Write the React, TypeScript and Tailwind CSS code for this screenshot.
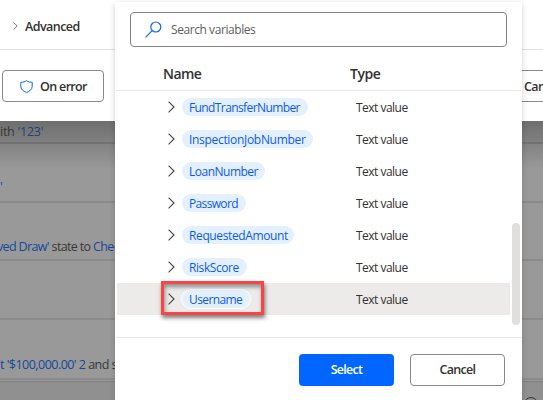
import React from "react";

const variables = [
  { name: "FundTransferNumber", chip: "w-[126px] tracking-[-0.6px]" },
  { name: "InspectionJobNumber", chip: "w-[131px] tracking-[-0.31px]" },
  { name: "LoanNumber", chip: "w-[83px] tracking-[-0.5px]" },
  { name: "Password", chip: "w-[64px] tracking-[-0.65px]" },
  { name: "RequestedAmount", chip: "w-[112px] tracking-[-0.38px]" },
  { name: "RiskScore", chip: "w-[65px] tracking-[-0.42px]" },
  { name: "Username", chip: "w-[68px] tracking-[-0.6px]", selected: true },
];

function Chevron({ className }: { className: string }) {
  return (
    <svg viewBox="0 0 7 12" className={className} fill="none" stroke="currentColor" strokeWidth="1.1">
      <path d="M.6.6 6 6 .6 11.4" />
    </svg>
  );
}

function VariableRow({ name, chip, selected }: { name: string; chip: string; selected?: boolean }) {
  return (
    <div className={"relative ml-0.5 flex h-8 w-[393px] items-center text-xs " + (selected ? "bg-[#edebe9]" : "")}>
      <Chevron className="ml-[51px] h-3 w-[7px] text-[#444]" />
      <div className="ml-[7px] w-[181px]">
        <div
          className={
            "flex h-[18px] items-center whitespace-nowrap rounded-full bg-[#e5f0ff] pl-[7px] pt-0.5 text-[#0b5bea] " +
            chip +
            (selected ? " outline outline-1 outline-white" : "")
          }
        >
          {name}
        </div>
      </div>
      <span className="-ml-[7px] whitespace-nowrap pt-0.5 tracking-[-0.52px]">Text value</span>
      {selected && (
        <div className="absolute -top-0.5 left-11 h-[34px] w-[103px] border-[3px] border-[#fb4245] shadow-[1px_3px_4px_rgba(0,0,0,0.5),inset_1px_3px_4px_rgba(0,0,0,0.4)]" />
      )}
    </div>
  );
}

function Backdrop() {
  return (
    <div className="flex h-[400px] flex-col">
      <div className="flex h-[50px] shrink-0 items-center border-b border-[#e1e1e1] bg-white pt-[3px]">
        <Chevron className="ml-[13px] h-[8px] w-[5px] text-[#444]" />
        <span className="ml-[7px] pt-0.5 text-[12.5px] font-semibold tracking-[-0.55px]">Advanced</span>
      </div>
      <div className="flex h-[71px] shrink-0 items-center justify-between bg-white pl-0.5 pt-px">
        <div className="flex h-8 w-[102px] items-center rounded-sm border border-[#8a8886]">
          <svg viewBox="0 0 13 13" className="ml-[17px] h-[13px] w-[13px]" fill="none" stroke="#0b63f6">
            <path d="M6.5.7C5 1.8 3 2.3.8 2.3v4c0 3 2.5 5 5.7 6.1 3.2-1.1 5.7-3.1 5.7-6.1v-4C10 2.3 8 1.8 6.5.7Z" />
          </svg>
          <span className="ml-[7px] whitespace-nowrap pt-0.5 text-[12.5px] font-semibold tracking-[-0.65px]">On error</span>
        </div>
        <div className="flex h-8 w-[41px] items-center overflow-hidden border-y border-[#8a8886] pl-[22px] pt-0.5 text-[12.5px] font-semibold tracking-[-0.6px]">
          Cancel
        </div>
      </div>
      <div className="relative flex min-h-0 flex-1 flex-col overflow-hidden bg-[#999] text-[12.5px] text-[#383838]">
        <div className="h-[23px] shrink-0 whitespace-pre border-b-2 border-[#858585] leading-[21px] tracking-[-0.25px]">
          ith <span className="text-[#14489d]">'123'</span>
        </div>
        <div className="flex h-[59px] shrink-0 items-center border-b-2 border-[#8b8b8b] pt-[29px] text-[#14489d]">'</div>
        <div className="h-[58px] shrink-0 whitespace-pre border-b-2 border-[#8b8b8b] pt-[35px] tracking-[-0.64px]">
          <span className="-ml-[3px] text-[#14489d]">ved Draw'</span> state to <span className="text-[#14489d]">Check</span>
        </div>
        <div className="h-[59px] shrink-0 border-b-2 border-[#8b8b8b]" />
        <div className="h-[60px] shrink-0 whitespace-pre border-b-2 border-[#8b8b8b] pt-[36px] tracking-[-0.53px]">
          <span className="text-[#14489d]">t '$100,000.00' 2</span> and set
        </div>
        <div className="mt-px flex min-h-0 flex-1 justify-end border-t border-[#808080] bg-[#909090] pr-[5px] pt-[15px]">
          <div className="h-[14px] w-[14px] shrink-0 rounded-full border-[1.5px] border-[#333]" />
        </div>
        <div className="absolute inset-x-0 top-0 h-12 bg-linear-to-b from-[rgba(50,50,50,0.42)] to-transparent" />
      </div>
    </div>
  );
}

export default function App() {
  return (
    <div className="relative h-[400px] w-[543px] overflow-hidden font-['Open_Sans','Noto_Sans',sans-serif] text-[#323130]">
      <Backdrop />
      <div className="absolute left-[115px] top-0.5 flex h-[420px] w-[407px] flex-col bg-white shadow-[0_2px_6px_rgba(0,0,0,0.18)]">
        <div className="ml-[15px] mt-2.5 flex h-[35px] w-[377px] shrink-0 items-center rounded-sm border border-[#858381]">
          <svg viewBox="0 0 17 17" className="ml-[14px] h-[17px] w-[17px]" fill="none" stroke="#0b63f6" strokeWidth="1.2">
            <circle cx="10.8" cy="6" r="5" />
            <path d="M7.1 9.6.6 16.3" />
          </svg>
          <span className="ml-[9px] pt-px text-xs tracking-[-0.43px] text-[#605e5c]">Search variables</span>
        </div>
        <div className="mx-px flex h-[44px] shrink-0 items-center border-b border-[#e8e8e8] pl-[47px] pt-[10px] text-sm font-semibold">
          <span className="w-[187px] tracking-[-0.55px]">Name</span>
          <span className="tracking-[-0.45px]">Type</span>
        </div>
        <div className="relative mx-px h-[247px] shrink-0 border-b border-[#e8e8e8]">
          <div className="-ml-px">
            {variables.map((variable) => (
              <VariableRow key={variable.name} {...variable} />
            ))}
          </div>
          <div className="absolute right-px top-[132px] h-[102px] w-2 rounded-full bg-[#e0dfde]" />
        </div>
        <div className="flex h-[48px] shrink-0 items-end justify-end gap-4 pr-[17px] text-[12.5px] font-semibold tracking-[-0.7px]">
          <button className="h-8 w-[95px] rounded-sm bg-[#0066ff] pt-px text-white">Select</button>
          <button className="h-8 w-[95px] rounded-sm border border-[#8a8886] pt-px">Cancel</button>
        </div>
      </div>
    </div>
  );
}
